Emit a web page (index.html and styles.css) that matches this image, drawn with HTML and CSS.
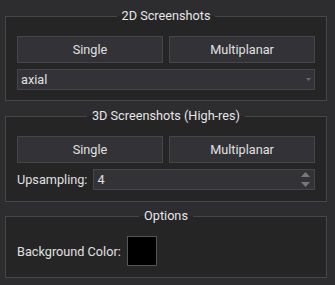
FILE: index.html
```html
<!DOCTYPE html>
<html>
<head>
<meta charset="utf-8">
<link rel="stylesheet" href="styles.css">
</head>
<body>
<div class="panel">
  <fieldset class="group g1">
    <legend>2D Screenshots</legend>
    <div class="row">
      <button class="btn">Single</button>
      <button class="btn">Multiplanar</button>
    </div>
    <div class="combo">
      <span class="combo-text">axial</span>
      <svg class="combo-arrow" width="5" height="3" viewBox="0 0 5 3"><path d="M0 0H5L2.5 3Z" fill="#6a6a6c"/></svg>
    </div>
  </fieldset>
  <fieldset class="group g2">
    <legend>3D Screenshots (High-res)</legend>
    <div class="row">
      <button class="btn">Single</button>
      <button class="btn">Multiplanar</button>
    </div>
    <div class="field-row">
      <span class="label">Upsampling:</span>
      <div class="spin">
        <span class="spin-text">4</span>
        <div class="spin-arrows">
          <svg width="9" height="5" viewBox="0 0 9 5"><path d="M0 5L4.5 0L9 5Z" fill="#78787a"/></svg>
          <svg width="9" height="5" viewBox="0 0 9 5"><path d="M0 0H9L4.5 5Z" fill="#78787a"/></svg>
        </div>
      </div>
    </div>
  </fieldset>
  <fieldset class="group g3">
    <legend>Options</legend>
    <div class="field-row">
      <span class="label">Background Color:</span>
      <div class="swatch"></div>
    </div>
  </fieldset>
</div>
</body>
</html>
```

FILE: styles.css
```css
html, body {
  margin: 0;
  padding: 0;
  background: #2d2d30;
}
body {
  font-family: Roboto, "Liberation Sans", sans-serif;
  font-size: 12.7px;
  color: #e0e0e0;
}
.panel {
  display: flex;
  flex-direction: column;
  width: 322px;
  padding: 8px 0 0 5px;
}
.group {
  margin: 0;
  border: 1px solid #46464a;
  background: #252526;
  padding: 12px 11px 10px 11px;
  min-width: 0;
}
.g2 {
  margin-top: 7px;
  padding-bottom: 11px;
}
.g3 {
  margin-top: 6px;
  padding-bottom: 11px;
}
.group legend {
  margin: 0 auto;
  padding: 0 5px;
  line-height: 16px;
  color: #e6e6e6;
}
.row {
  display: flex;
  gap: 6px;
}
.btn {
  flex: 1;
  height: 27px;
  margin: 0;
  padding: 0;
  background: #333337;
  border: 1px solid #46464a;
  color: #e0e0e0;
  font-family: inherit;
  font-size: 12.7px;
}
.combo {
  margin-top: 6px;
  height: 21px;
  box-sizing: border-box;
  background: #333337;
  border: 1px solid #46464a;
  display: flex;
  align-items: center;
  justify-content: space-between;
  padding: 0 3px 0 3px;
}
.combo-arrow {
  display: block;
}
.field-row {
  display: flex;
  align-items: center;
  gap: 6px;
}
.g2 .field-row {
  margin-top: 6px;
}
.spin {
  flex: 1;
  height: 21px;
  box-sizing: border-box;
  background: #333337;
  border: 1px solid #46464a;
  display: flex;
  align-items: center;
  justify-content: space-between;
  padding: 0 4px 0 3px;
}
.spin-arrows {
  display: flex;
  flex-direction: column;
  gap: 5px;
}
.spin-arrows svg {
  display: block;
}
.swatch {
  width: 30px;
  height: 30px;
  box-sizing: border-box;
  background: #000;
  border: 1px solid #56565a;
}
```
